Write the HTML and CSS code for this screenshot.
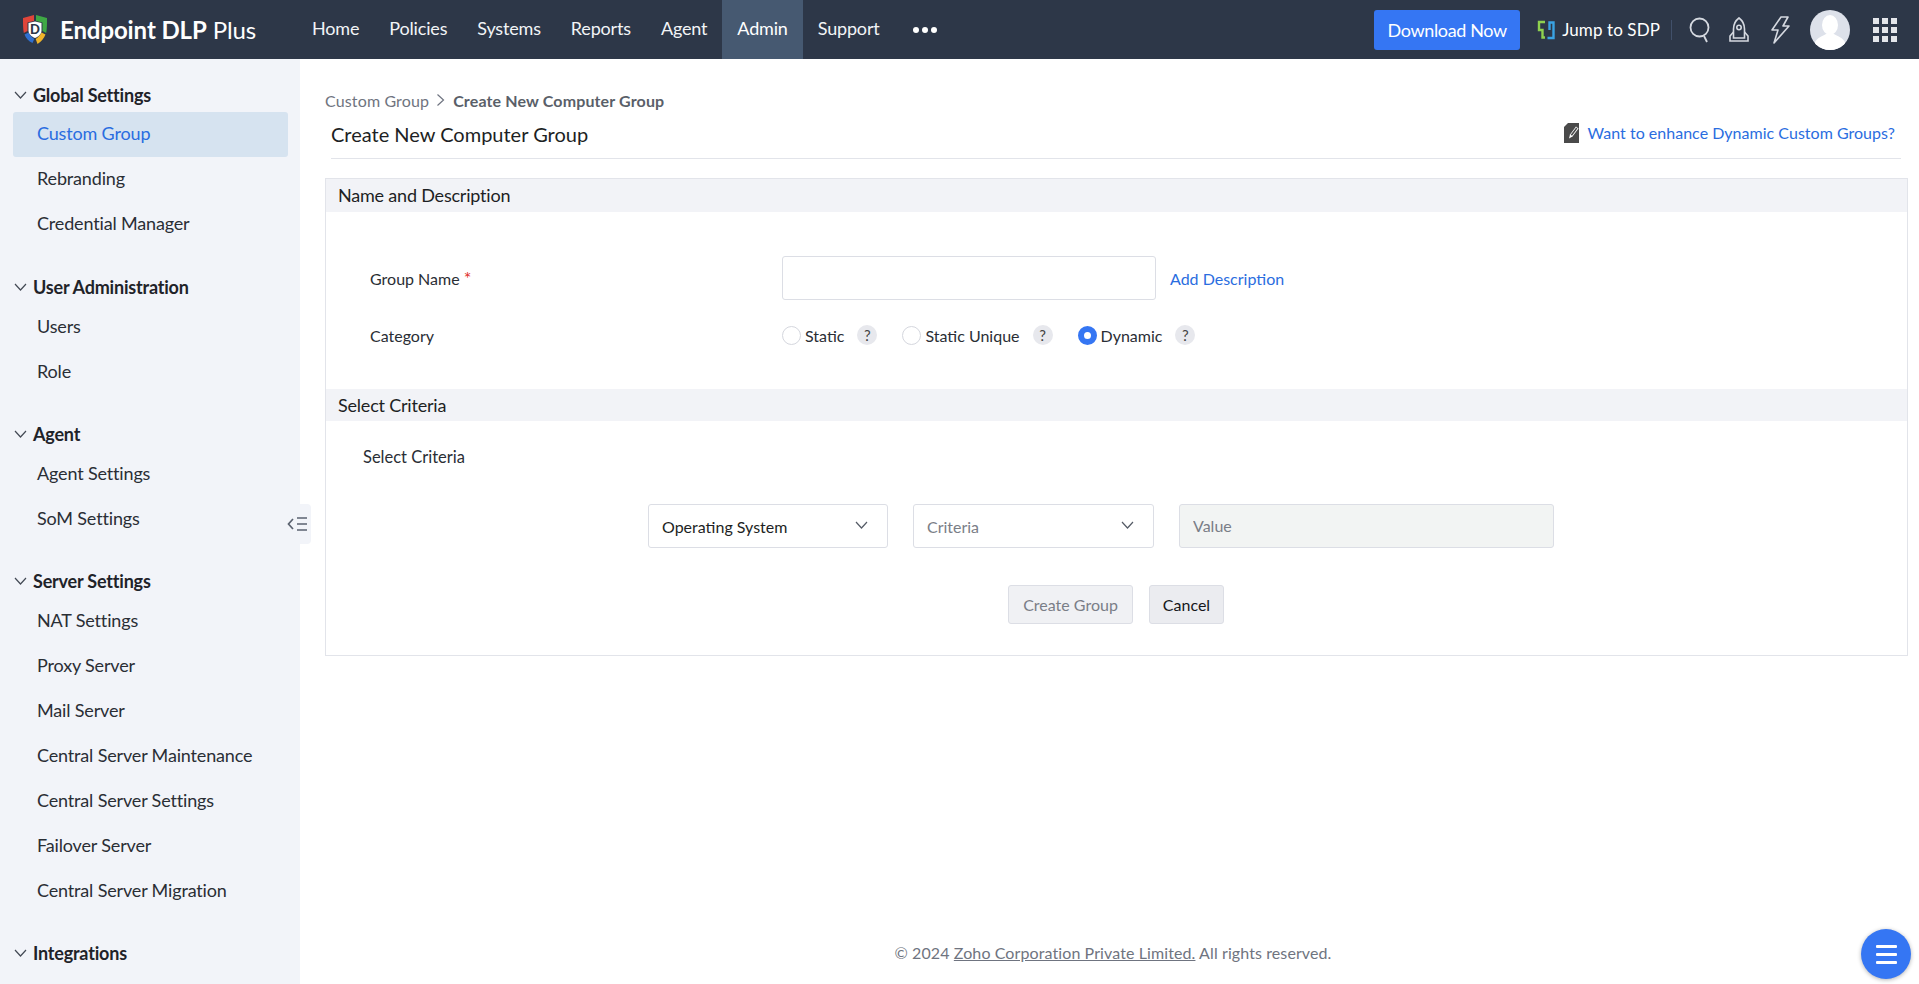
FILE: index.html
```html
<!DOCTYPE html>
<html lang="en">
<head>
    <meta charset="UTF-8">
    <title>Endpoint DLP Plus</title>
    <link rel="stylesheet" href="styles.css">
</head>
<body>
<div id="topbar">
    <div class="brand">
        <svg class="logo" width="26" height="31" viewBox="0 0 26 31">
            <path d="M1 4 L12 1 L12 7 L5.5 8.5 L5.5 17 L1.8 19 C1 15 1 9 1 4Z" fill="#e0453a"/>
            <path d="M25 4 L14 1 L14 7 L20.5 8.5 L20.5 17 L24.2 19 C25 15 25 9 25 4Z" fill="#3fa845"/>
            <path d="M2.5 20.5 L6.5 18.5 C8 21.5 10 23.5 12.3 25 L10.5 29 C6.5 27 4 24.5 2.5 20.5Z" fill="#2f6fd0"/>
            <path d="M23.5 20.5 L19.5 18.5 C18 21.5 16 23.5 13.7 25 L15.5 30 C19.5 27.5 22 24.5 23.5 20.5Z" fill="#f0b429"/>
            <path d="M6.5 9 L13 7.5 L19.5 9 L19.5 16.5 C19.5 20 16.5 22.5 13 24 C9.5 22.5 6.5 20 6.5 16.5Z" fill="#fff"/>
            <text x="13" y="19.5" class="logo-letter" text-anchor="middle">D</text>
        </svg>
        <span class="brand-name"><b>Endpoint DLP</b> Plus</span>
    </div>
    <div class="nav">
        <a>Home</a>
        <a>Policies</a>
        <a>Systems</a>
        <a>Reports</a>
        <a>Agent</a>
        <a class="active">Admin</a>
        <a>Support</a>
        <span class="more"><i></i><i></i><i></i></span>
    </div>
    <div class="tools">
        <button class="download">Download Now</button>
        <svg class="sdp-icon" width="18" height="20" viewBox="0 0 18 20" fill="none" stroke-width="2.4">
            <path d="M8 2 H2 V10 H5.5 V17.5 H8" stroke="#8fd14f"/>
            <path d="M10.5 18 H16.5 V2.5 H12.5 V10" stroke="#3aa3e3"/>
        </svg>
        <span class="sdp-text">Jump to SDP</span>
        <span class="sep"></span>
        <svg class="tool-icon search" width="22" height="26" viewBox="0 0 22 26" fill="none" stroke="#d5d9e0" stroke-width="1.8">
            <circle cx="10.5" cy="10.5" r="9"/>
            <path d="M15 19 L18 25"/>
        </svg>
        <svg class="tool-icon rocket" width="22" height="26" viewBox="0 0 22 26" fill="none" stroke="#d5d9e0" stroke-width="1.6">
            <path d="M11 1 C15 4 16.5 8 16.5 12 V21 H5.5 V12 C5.5 8 7 4 11 1Z"/>
            <circle cx="11" cy="10.5" r="2.2"/>
            <path d="M5.5 15 L2 19 V24 H20 V19 L16.5 15"/>
        </svg>
        <svg class="tool-icon bolt" width="20" height="30" viewBox="0 0 20 30" fill="none" stroke="#d5d9e0" stroke-width="1.6" stroke-linejoin="round">
            <path d="M11 2 H18 L13 11 H19 L4 28 L8 15 H2 Z"/>
        </svg>
        <div class="avatar">
            <svg width="40" height="40" viewBox="0 0 40 40">
                <ellipse cx="20" cy="15" rx="8" ry="10" fill="#fff"/>
                <path d="M4 34 C7 27 13 26 16 24 H24 C27 26 33 27 36 34 L30 40 H10Z" fill="#fff"/>
            </svg>
        </div>
        <div class="apps">
            <i></i><i></i><i></i><i></i><i></i><i></i><i></i><i></i><i></i>
        </div>
    </div>
</div>

<div id="page">
    <div id="sidebar">
        <div class="group">
            <div class="group-title"><svg class="chev" width="13" height="8" viewBox="0 0 13 8"><path d="M1 1 L6.5 7 L12 1"/></svg>Global Settings</div>
            <a class="item current">Custom Group</a>
            <a class="item">Rebranding</a>
            <a class="item">Credential Manager</a>
        </div>
        <div class="group">
            <div class="group-title"><svg class="chev" width="13" height="8" viewBox="0 0 13 8"><path d="M1 1 L6.5 7 L12 1"/></svg>User Administration</div>
            <a class="item">Users</a>
            <a class="item">Role</a>
        </div>
        <div class="group">
            <div class="group-title"><svg class="chev" width="13" height="8" viewBox="0 0 13 8"><path d="M1 1 L6.5 7 L12 1"/></svg>Agent</div>
            <a class="item">Agent Settings</a>
            <a class="item">SoM Settings</a>
        </div>
        <div class="group">
            <div class="group-title"><svg class="chev" width="13" height="8" viewBox="0 0 13 8"><path d="M1 1 L6.5 7 L12 1"/></svg>Server Settings</div>
            <a class="item">NAT Settings</a>
            <a class="item">Proxy Server</a>
            <a class="item">Mail Server</a>
            <a class="item">Central Server Maintenance</a>
            <a class="item">Central Server Settings</a>
            <a class="item">Failover Server</a>
            <a class="item">Central Server Migration</a>
        </div>
        <div class="group">
            <div class="group-title"><svg class="chev" width="13" height="8" viewBox="0 0 13 8"><path d="M1 1 L6.5 7 L12 1"/></svg>Integrations</div>
        </div>
    </div>
    <div class="collapse">
        <svg width="21" height="16" viewBox="0 0 21 16" fill="none" stroke="#5b6270" stroke-width="1.7">
            <path d="M6 3 L1.5 8 L6 13"/>
            <path d="M10 2 H20 M10 8 H20 M10 14 H20"/>
        </svg>
    </div>

    <div id="content">
        <div class="crumbs">
            <span>Custom Group</span>
            <svg width="9" height="14" viewBox="0 0 9 14" fill="none" stroke="#6f7480" stroke-width="1.2"><path d="M1.5 1.5 L7.5 7 L1.5 12.5"/></svg>
            <b>Create New Computer Group</b>
        </div>
        <div class="title-row">
            <h1>Create New Computer Group</h1>
            <a class="enhance">
                <svg width="17" height="20" viewBox="0 0 17 20">
                    <path d="M5 0 H16 V20 H1 V4Z" fill="#4a4a4a"/>
                    <path d="M6 15.5 L7 11.5 L13 3.5 L15.5 5.5 L9.5 13.5Z" fill="#fff"/>
                    <path d="M7.7 11.8 L13.2 4.6 L14.4 5.6 L9 12.8Z" fill="#4a4a4a"/>
                </svg>
                Want to enhance Dynamic Custom Groups?
            </a>
        </div>

        <div class="panel">
            <div class="band first">Name and Description</div>
            <div class="form">
                <div class="form-row tall">
                    <label>Group Name <span class="req">*</span></label>
                    <div class="field">
                        <input class="text-input" type="text">
                        <a class="add-desc">Add Description</a>
                    </div>
                </div>
                <div class="form-row tall">
                    <label>Category</label>
                    <div class="field radios">
                        <span class="radio"></span><span class="radio-label">Static</span><span class="help">?</span>
                        <span class="radio"></span><span class="radio-label">Static Unique</span><span class="help">?</span>
                        <span class="radio on"></span><span class="radio-label">Dynamic</span><span class="help">?</span>
                    </div>
                </div>
            </div>
            <div class="band">Select Criteria</div>
            <div class="criteria-label">Select Criteria</div>
            <div class="criteria">
                <div class="select os">Operating System<svg width="13" height="8" viewBox="0 0 13 8"><path d="M1 1 L6.5 7 L12 1"/></svg></div>
                <div class="select crit muted">Criteria<svg width="13" height="8" viewBox="0 0 13 8"><path d="M1 1 L6.5 7 L12 1"/></svg></div>
                <input class="value" type="text" placeholder="Value" disabled>
            </div>
            <div class="actions">
                <button class="btn off">Create Group</button>
                <button class="btn cancel">Cancel</button>
            </div>
        </div>

        <div class="footer">&copy; 2024 <u>Zoho Corporation Private Limited.</u> All rights reserved.</div>
    </div>
</div>

<div class="fab"><i></i><i></i><i></i></div>
</body>
</html>
```

FILE: styles.css
```css
* {
    box-sizing: border-box;
}
html, body {
    height: 100%;
}
body {
    margin: 0;
    height: 984px;
    overflow: hidden;
    font-family: "Lato", "Liberation Sans", sans-serif;
    font-size: 16px;
    color: #222;
    background: #fff;
}

/* top bar */
#topbar {
    height: 59px;
    background: #2d3748;
    color: #fff;
    display: flex;
    align-items: center;
}
.brand {
    width: 297px;
    display: flex;
    align-items: center;
    padding-left: 22px;
}
.logo {
    flex: none;
}
.logo-letter {
    font-family: "Lato", sans-serif;
    font-size: 13px;
    font-weight: 900;
    fill: #2d3748;
}
.brand-name {
    margin-left: 12px;
    font-size: 24px;
    letter-spacing: -0.1px;
    white-space: nowrap;
}
.nav {
    display: flex;
    align-items: stretch;
    height: 59px;
    font-size: 18px;
    letter-spacing: -0.17px;
}
.nav a {
    padding: 0 15px;
    line-height: 57px;
    color: #f2f4f7;
}
.nav a.active {
    background: #465971;
    color: #fff;
}
.more {
    display: flex;
    align-items: center;
    gap: 3px;
    margin-left: 18px;
}
.more i {
    width: 6px;
    height: 6px;
    border-radius: 50%;
    background: #fff;
}
.tools {
    margin-left: auto;
    display: flex;
    align-items: center;
}
.download {
    width: 146px;
    height: 40px;
    border: 0;
    border-radius: 3px;
    background: #3576f3;
    color: #fff;
    font-family: inherit;
    font-size: 18px;
    letter-spacing: -0.35px;
    padding: 0;
    margin-top: 1px;
}
.sdp-icon {
    margin-left: 17px;
}
.sdp-text {
    margin-left: 7px;
    font-size: 17px;
    letter-spacing: 0.1px;
}
.sep {
    width: 1px;
    height: 20px;
    margin-left: 11px;
    background: #41506a;
}
.tool-icon {
    flex: none;
}
.search {
    margin-left: 17px;
}
.rocket {
    margin-left: 17px;
}
.bolt {
    margin-left: 20px;
}
.avatar {
    width: 40px;
    height: 40px;
    margin-left: 20px;
    border-radius: 50%;
    overflow: hidden;
    background: #dde1ea;
}
.apps {
    width: 24px;
    margin: 0 22px 0 23px;
    display: grid;
    grid-template-columns: repeat(3, 6px);
    gap: 3px;
}
.apps i {
    width: 6px;
    height: 6px;
    background: #e4e6ea;
}

/* side menu */
#page {
    display: flex;
    height: 925px;
    position: relative;
}
#sidebar {
    width: 300px;
    flex: none;
    background: #f2f4f9;
    padding-top: 17px;
    overflow: hidden;
}
.group {
    margin-bottom: 21px;
}
.group-title {
    height: 36px;
    display: flex;
    align-items: center;
    padding: 1px 0 0 14px;
    font-size: 18px;
    font-weight: 700;
    letter-spacing: -0.2px;
    color: #1f2329;
}
.chev {
    margin-right: 6px;
    fill: none;
    stroke: #444a55;
    stroke-width: 1.2;
}
.item {
    display: block;
    height: 45px;
    line-height: 44px;
    margin: 0 12px 0 13px;
    padding-left: 24px;
    border-radius: 3px;
    font-size: 18px;
    letter-spacing: -0.16px;
    color: #2a2e35;
}
.group:first-child .item {
    line-height: 43px;
}
.item.current {
    background: #d6e3f0;
    color: #2a6de0;
}
.collapse {
    position: absolute;
    left: 284px;
    top: 445px;
    width: 27px;
    height: 40px;
    display: flex;
    align-items: center;
    justify-content: center;
    background: #f2f4f9;
    border-radius: 0 4px 4px 0;
}

/* main area */
#content {
    flex: 1;
    padding: 31px 11px 0 25px;
    display: flex;
    flex-direction: column;
    min-width: 0;
}
.crumbs {
    height: 20px;
    display: flex;
    align-items: center;
    gap: 7px;
    letter-spacing: 0.14px;
    color: #6f7480;
}
.crumbs b {
    color: #5a5f69;
    margin-left: 1px;
}
.title-row {
    margin: 5px 7px 0 6px;
    height: 44px;
    border-bottom: 1px solid #e2e4ea;
    display: flex;
    justify-content: space-between;
    align-items: center;
    padding-bottom: 6px;
}
.title-row h1 {
    margin: 0;
    font-size: 20px;
    font-weight: 400;
    color: #1d1f24;
}
.enhance {
    display: flex;
    align-items: center;
    gap: 8px;
    padding: 0 6px 2px 0;
    letter-spacing: 0.02px;
    color: #2a6de0;
}
.panel {
    margin-top: 19px;
    height: 478px;
    border: 1px solid #e2e4ea;
}
.band {
    height: 32px;
    line-height: 32px;
    padding-left: 12px;
    background: #f2f3f7;
    font-size: 18px;
    letter-spacing: -0.2px;
    color: #1d1f24;
}
.band.first {
    height: 33px;
    line-height: 33px;
}
.form {
    padding: 44px 0 32px 44px;
}
.form-row {
    display: grid;
    grid-template-columns: 412px 1fr;
    align-items: center;
    height: 44px;
}
.form-row + .form-row {
    margin-top: 13px;
}
.form-row label {
    color: #2a2e35;
}
.req {
    color: #e0312d;
    font-size: 18px;
    line-height: 14px;
}
.field {
    display: flex;
    align-items: center;
}
.text-input {
    width: 374px;
    height: 44px;
    border: 1px solid #dcdee5;
    border-radius: 3px;
    background: #fff;
}
.add-desc {
    margin-left: 14px;
    color: #2a6de0;
}
.radio {
    width: 19px;
    height: 19px;
    flex: none;
    border: 1px solid #d5d7de;
    border-radius: 50%;
    background: #fff;
}
.radio.on {
    border: 6px solid #3576f3;
}
.radio-label {
    margin-left: 4px;
    color: #2a2e35;
}
.help {
    width: 20px;
    height: 20px;
    margin: 0 25px 0 13px;
    border-radius: 50%;
    background: #e7e8ed;
    font-size: 15px;
    line-height: 20px;
    text-align: center;
    color: #444;
}
.criteria-label {
    margin: 25px 0 0 37px;
    height: 22px;
    line-height: 22px;
    font-size: 16.5px;
    color: #2a2e35;
}
.criteria {
    margin-top: 36px;
    padding-left: 322px;
    display: flex;
    gap: 25px;
}
.select {
    height: 44px;
    display: flex;
    align-items: center;
    justify-content: space-between;
    padding: 1px 19px 0 13px;
    border: 1px solid #dcdee5;
    border-radius: 3px;
    background: #fff;
    color: #1d1f24;
}
.select svg {
    fill: none;
    stroke: #555b66;
    stroke-width: 1.2;
    margin-bottom: 3px;
}
.select.os {
    width: 240px;
}
.select.crit {
    width: 241px;
}
.select.muted {
    color: #7a7e87;
}
.value {
    width: 375px;
    height: 44px;
    padding: 0 13px 1px;
    border: 1px solid #dcdee5;
    border-radius: 3px;
    background: #f2f4f3;
    font-family: inherit;
    font-size: 16px;
}
.value::placeholder {
    color: #7a7e87;
    opacity: 1;
}
.actions {
    margin-top: 37px;
    padding-right: 1px;
    display: flex;
    justify-content: center;
    gap: 16px;
}
.btn {
    width: 125px;
    height: 39px;
    padding: 0;
    border: 1px solid #dcdee5;
    border-radius: 3px;
    background: #ebecf0;
    font-family: inherit;
    font-size: 16px;
    color: #15171b;
}
.btn.cancel {
    width: 75px;
}
.btn.off {
    background: #f0f1f4;
    color: #7a7e87;
}
.footer {
    margin-top: auto;
    height: 41px;
    text-align: center;
    letter-spacing: 0.1px;
    color: #6f7480;
    padding-right: 7px;
}

.fab {
    position: absolute;
    left: 1861px;
    top: 929px;
    width: 50px;
    height: 50px;
    border-radius: 50%;
    background: #3576f3;
    box-shadow: 0 1px 4px rgba(0, 0, 0, 0.3);
    display: flex;
    flex-direction: column;
    align-items: center;
    justify-content: center;
    gap: 5px;
}
.fab i {
    width: 21px;
    height: 3px;
    border-radius: 1px;
    background: #fff;
}
```
